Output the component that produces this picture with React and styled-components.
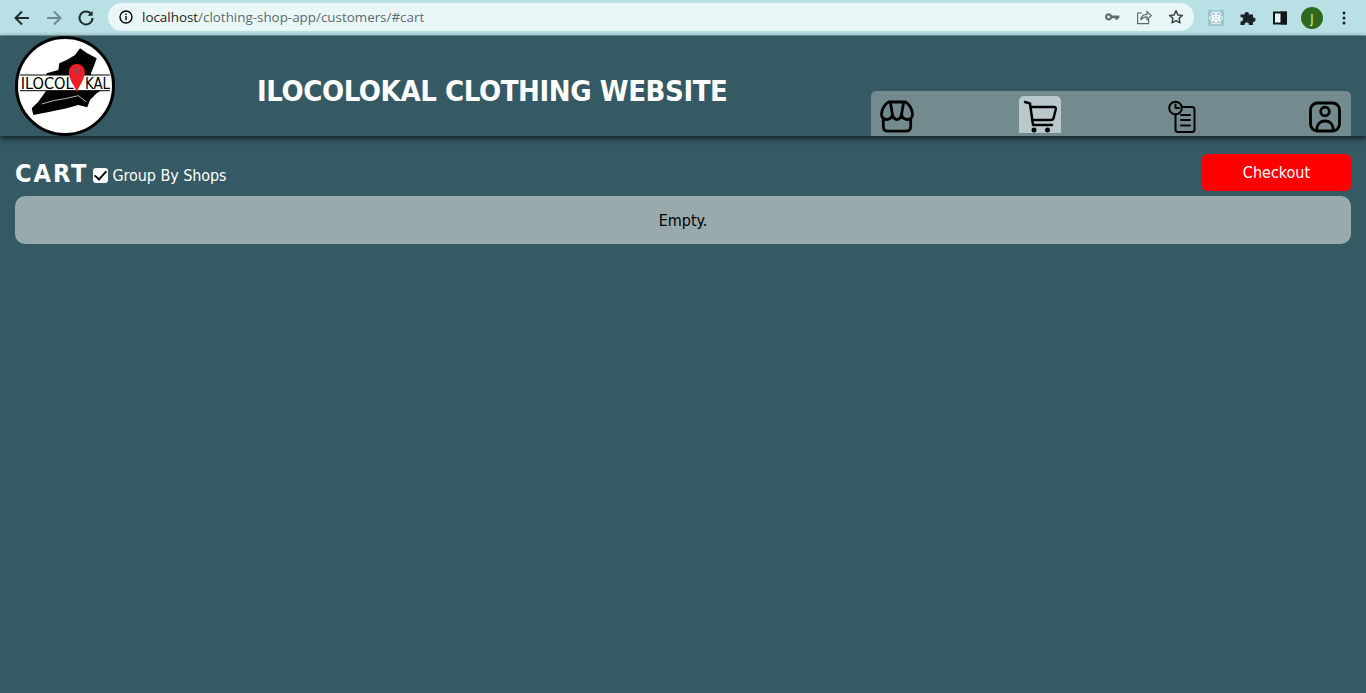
import React from 'react';
import styled, { createGlobalStyle } from 'styled-components';

const Global = createGlobalStyle`
    html, body {
        margin: 0;
        height: 100%;
        overflow: hidden;
        background: #355a63;
    }
    #root {
        height: 693px;
    }
`;

const Page = styled.div`
    display: flex;
    flex-direction: column;
    height: 693px;
    background: #355a63;
    font-family: 'DejaVu Sans', sans-serif;
    font-stretch: condensed;
`;

/* browser chrome */
const BrowserBar = styled.div`
    display: flex;
    align-items: center;
    height: 35px;
    padding: 0 10px;
    background: #b8e0e5;
    border-bottom: 1px solid #7fa3a9;
    box-sizing: content-box;
`;

const ChromeButton = styled.span`
    display: flex;
    align-items: center;
    justify-content: center;
    width: 24px;
    height: 24px;
    margin-right: ${p => p.$gap || 8}px;
    color: ${p => p.$color || '#202b2e'};
    flex: none;
`;

const UrlPill = styled.div`
    display: flex;
    align-items: center;
    width: 1086px;
    height: 28px;
    margin: 0 0 1px 2px;
    padding: 0 10px 0 10px;
    box-sizing: border-box;
    border-radius: 14px;
    background: #eaf7f8;
    flex: none;
`;

const UrlText = styled.span`
    flex: 1;
    margin-left: 8px;
    font-family: 'Open Sans', sans-serif;
    font-stretch: normal;
    font-size: 13.4px;
    color: #5d6a6d;
    b {
        font-weight: 400;
        color: #1f2527;
    }
`;

const PillIcon = styled.span`
    display: flex;
    width: 16px;
    height: 16px;
    margin-left: ${p => p.$gap || 0}px;
    color: ${p => p.$color || '#5f6b6e'};
`;

const Extensions = styled.div`
    display: flex;
    align-items: center;
    margin-left: 6px;
`;

const ExtSlot = styled.span`
    display: flex;
    align-items: center;
    justify-content: center;
    width: 32px;
    height: 24px;
`;

const Avatar = styled.span`
    display: flex;
    align-items: center;
    justify-content: center;
    width: 22px;
    height: 22px;
    border-radius: 50%;
    background: #2f6a1c;
    color: #e6f2d8;
    font-family: 'Open Sans', sans-serif;
    font-size: 13px;
`;

/* site header */
const Header = styled.header`
    position: relative;
    display: flex;
    height: 100px;
    padding: 0 15px;
    background: #355a63;
    box-shadow: 0 2px 6px rgba(0, 0, 0, 0.75);
`;

const Logo = styled.svg`
    width: 100px;
    height: 100px;
    flex: none;
`;

const Title = styled.h1`
    margin: 37px 0 0 142px;
    width: 614px;
    flex: none;
    font-size: 29px;
    line-height: 36px;
    font-weight: 700;
    letter-spacing: -0.42px;
    color: #fff;
    white-space: nowrap;
`;

const Nav = styled.nav`
    align-self: flex-end;
    display: flex;
    justify-content: space-between;
    width: 480px;
    height: 45px;
    padding: 5px 5px 3px;
    box-sizing: border-box;
    border-radius: 5px 5px 0 0;
    background: #738b8e;
`;

const NavItem = styled.a`
    display: flex;
    justify-content: center;
    align-items: flex-end;
    width: 42px;
    border-radius: 5px 5px 0 0;
    background: ${p => (p.$active ? '#b9c8cc' : 'transparent')};
    svg {
        display: block;
        width: 34px;
        height: 34px;
    }
`;

/* cart */
const Main = styled.main`
    padding: 18px 15px 0;
`;

const CartBar = styled.div`
    display: flex;
    align-items: center;
    justify-content: space-between;
    height: 37px;
    margin-bottom: 5px;
`;

const CartTitle = styled.div`
    display: flex;
    align-items: center;
    color: #fff;
`;

const Heading = styled.h2`
    margin: 2px 5px 0 0;
    font-size: 25px;
    line-height: 37px;
    font-weight: 700;
    letter-spacing: 2px;
`;

const GroupLabel = styled.label`
    display: flex;
    align-items: center;
    margin-top: 6px;
    font-size: 16px;
    letter-spacing: -0.07px;
`;

const GroupCheck = styled.input`
    position: relative;
    appearance: none;
    width: 15px;
    height: 15px;
    margin: 0 4px 0 0;
    border-radius: 3px;
    background: #fff;
    &:checked::after {
        content: '';
        position: absolute;
        left: 4px;
        top: 0;
        width: 5px;
        height: 10px;
        border: solid #111;
        border-width: 0 2.5px 2.5px 0;
        transform: rotate(42deg);
    }
`;

const CheckoutButton = styled.button`
    width: 149px;
    height: 37px;
    border: 0;
    border-radius: 5px;
    background: #ff0000;
    color: #fff;
    font-family: inherit;
    font-stretch: condensed;
    font-size: 16px;
`;

const EmptyPanel = styled.div`
    height: 48px;
    line-height: 50px;
    border-radius: 10px;
    background: #99aaad;
    color: #000;
    text-align: center;
    font-size: 16px;
`;

const BackIcon = ({ flip }) => (
    <svg width="18" height="18" viewBox="0 0 18 18" fill="none" stroke="currentColor" strokeWidth="2" style={flip ? { transform: 'scaleX(-1)' } : undefined}>
        <path d="M16 9H3M9 2.5 2.5 9 9 15.5" />
    </svg>
);

const ReloadIcon = () => (
    <svg width="18" height="18" viewBox="0 0 18 18" fill="none" stroke="currentColor" strokeWidth="2">
        <path d="M14.3 5.2A6.5 6.5 0 1 0 15.5 9" />
        <path d="M15.6 1.8v5h-5z" fill="currentColor" stroke="none" />
    </svg>
);

const InfoIcon = () => (
    <svg width="16" height="16" viewBox="0 0 16 16" fill="none" stroke="currentColor" strokeWidth="1.4">
        <circle cx="8" cy="8" r="6" />
        <path d="M8 7v4.2M8 4.6v1.4" />
    </svg>
);

const KeyIcon = () => (
    <svg width="16" height="16" viewBox="0 0 16 16" fill="currentColor">
        <path fillRule="evenodd" d="M4.6 4.2a3.6 3.6 0 0 1 3.4 2.4h7.4v2.6h-1.6v1.6h-2.4V9.2H8a3.6 3.6 0 1 1-3.4-5zm0 2.3a1.4 1.4 0 1 0 0 2.8 1.4 1.4 0 0 0 0-2.8z" />
    </svg>
);

const ShareIcon = () => (
    <svg width="16" height="16" viewBox="0 0 16 16" fill="none" stroke="currentColor" strokeWidth="1.2">
        <path d="M6 4H1.6v10.6h11V10" />
        <path d="M4.6 11c.6-3.6 3-5.6 6.4-5.6V2.6l4.2 4-4.2 4V7.8c-2.8 0-4.8 1-6.4 3.2z" />
    </svg>
);

const StarIcon = () => (
    <svg width="16" height="16" viewBox="0 0 16 16" fill="none" stroke="currentColor" strokeWidth="1.5" strokeLinejoin="round">
        <path d="M8 1.8l1.9 4.1 4.5.5-3.3 3 .9 4.5L8 11.6l-4 2.3.9-4.5-3.3-3 4.5-.5z" />
    </svg>
);

const ReactExtIcon = () => (
    <svg width="16" height="16" viewBox="0 0 16 16" fill="none" stroke="#fff" strokeWidth="1" style={{ background: '#9cc6cc' }}>
        <ellipse cx="8" cy="8" rx="6.5" ry="2.7" />
        <ellipse cx="8" cy="8" rx="6.5" ry="2.7" transform="rotate(60 8 8)" />
        <ellipse cx="8" cy="8" rx="6.5" ry="2.7" transform="rotate(120 8 8)" />
        <circle cx="8" cy="8" r="1.2" fill="#fff" />
    </svg>
);

const PuzzleIcon = () => (
    <svg width="16" height="16" viewBox="0 0 16 16" fill="#1b2124">
        <path d="M.5 4.5h4.2a2.1 2.1 0 1 1 4.1 0h4.2v3.2a2.1 2.1 0 1 1 0 4.1v3.2H8.8a2.1 2.1 0 1 0-4.1 0H.5v-3.7a2.1 2.1 0 1 0 0-4.1z" />
    </svg>
);

const SidePanelIcon = () => (
    <svg width="16" height="16" viewBox="0 0 16 16" fill="none" stroke="#12181a" strokeWidth="2">
        <rect x="2" y="2.5" width="12" height="11" fill="#eaf7f8" />
        <rect x="9.5" y="2.5" width="4.5" height="11" fill="#12181a" />
    </svg>
);

const DotsIcon = () => (
    <svg width="16" height="16" viewBox="0 0 16 16" fill="#1b2124">
        <circle cx="8" cy="3" r="1.5" />
        <circle cx="8" cy="8" r="1.5" />
        <circle cx="8" cy="13" r="1.5" />
    </svg>
);

const StoreIcon = () => (
    <svg viewBox="0 0 34 34" fill="none" stroke="#000" strokeWidth="2.8" strokeLinecap="round" strokeLinejoin="round">
        <path d="M8.5 3H25.5C29 5 32.5 10 32.5 15.5 32.5 18.5 30 20.5 27.5 20.5 25 20.5 22.5 19 21.5 16 20.5 19 19 20.5 17 20.5 15 20.5 13.5 19 12.5 16 11.5 19 9 20.5 6.5 20.5 4 20.5 1.5 18.5 1.5 15.5 1.5 10 5 5 8.5 3Z" />
        <path d="M10.5 4 12.5 16M23.500 4 21.5 16" />
        <path d="M3.3 20v7.500c0 3 1.700 4.700 4.700 4.700h18c3 0 4.700-1.700 4.700-4.700V20" />
    </svg>
);

const CartIcon = () => (
    <svg viewBox="0 0 34 34" fill="none" stroke="#000" strokeWidth="2.4" strokeLinecap="round" strokeLinejoin="round">
        <path d="M2 3l5 1.500L10 26h19" />
        <path d="M7.500 8h23.500c1.500 0 2 1 1.700 2.500L30.500 19.500c-.4 1-1 1.500-2.500 1.500H9.500" />
        <circle cx="11" cy="31" r="2.500" fill="#000" stroke="none" />
        <circle cx="24.500" cy="31" r="2.500" fill="#000" stroke="none" />
    </svg>
);

const HistoryIcon = () => (
    <svg viewBox="0 0 34 34" fill="none" stroke="#000" strokeWidth="2" strokeLinecap="round" strokeLinejoin="round">
        <path d="M14 8h13c1.500 0 2.500 1 2.500 2.500v20c0 1.500-1 2.500-2.500 2.500H13c-1.500 0-2.500-1-2.500-2.500V15" />
        <circle cx="10.500" cy="9" r="6.300" fill="#738b8e" />
        <path d="M10.500 5.500V9h3.500" />
        <path d="M16 16h9M16 21h9M16 26.500h9" />
    </svg>
);

const ProfileIcon = () => (
    <svg viewBox="0 0 34 34" fill="none" stroke="#000" strokeWidth="2.8" strokeLinecap="round" strokeLinejoin="round">
        <rect x="2.500" y="4" width="29" height="28" rx="7" />
        <circle cx="17" cy="12.500" r="4.300" />
        <path d="M8.700 31c0-5 3-9 8.300-9s8.300 4 8.300 9" />
    </svg>
);

const LogoMark = () => (
    <Logo viewBox="0 0 100 100">
        <circle cx="50" cy="50" r="48.500" fill="#fff" stroke="#000" strokeWidth="3" />
        <path d="M65 12.300 60 19 51.700 24 44.300 27.300 43.300 34 31.700 37.300V40H76V37.300L79.300 29 81.700 22.300 72.300 17.300Z" fill="#000" />
        <path d="M31.700 54 23.300 65.700 16.700 72.300 18.300 79 35 75.700 51.700 72.300 63.300 69 72.300 71.300 75 64 81.700 57.300 86.700 54Z" fill="#000" />
        <path d="M26.700 68 38.300 64.700 51.700 62.300 63.300 59.700 71 65.700" fill="none" stroke="#fff" strokeWidth="0.7" />
        <rect x="5" y="39" width="90" height="15.700" fill="#fff" />
        <path d="M5 39h90M5 54.700h90" stroke="#000" strokeWidth="1" />
        <text x="5.700" y="53.300" fontFamily="'DejaVu Sans', sans-serif" fontSize="15.500" textLength="53" lengthAdjust="spacingAndGlyphs">ILOCOL</text>
        <text x="70" y="53.300" fontFamily="'DejaVu Sans', sans-serif" fontSize="15.500" textLength="25" lengthAdjust="spacingAndGlyphs">KAL</text>
        <path d="M61.800 56c-1.500-5-8-12-8-20a8 8 0 0 1 16 0c0 8-6.500 15-8 20z" fill="#ee1f2b" />
        <circle cx="62" cy="35" r="3.500" fill="#b33a40" />
    </Logo>
);

const App = () => (
    <Page>
        <Global />
        <BrowserBar>
            <ChromeButton><BackIcon /></ChromeButton>
            <ChromeButton $color="#6f8a90"><BackIcon flip /></ChromeButton>
            <ChromeButton><ReloadIcon /></ChromeButton>
            <UrlPill>
                <InfoIcon />
                <UrlText><b>localhost</b>/clothing-shop-app/customers/#cart</UrlText>
                <PillIcon><KeyIcon /></PillIcon>
                <PillIcon $gap={16}><ShareIcon /></PillIcon>
                <PillIcon $gap={16} $color="#3c4447"><StarIcon /></PillIcon>
            </UrlPill>
            <Extensions>
                <ExtSlot><ReactExtIcon /></ExtSlot>
                <ExtSlot><PuzzleIcon /></ExtSlot>
                <ExtSlot><SidePanelIcon /></ExtSlot>
                <ExtSlot><Avatar>J</Avatar></ExtSlot>
                <ExtSlot><DotsIcon /></ExtSlot>
            </Extensions>
        </BrowserBar>
        <Header>
            <LogoMark />
            <Title>ILOCOLOKAL CLOTHING WEBSITE</Title>
            <Nav>
                <NavItem><StoreIcon /></NavItem>
                <NavItem $active><CartIcon /></NavItem>
                <NavItem><HistoryIcon /></NavItem>
                <NavItem><ProfileIcon /></NavItem>
            </Nav>
        </Header>
        <Main>
            <CartBar>
                <CartTitle>
                    <Heading>CART</Heading>
                    <GroupLabel>
                        <GroupCheck type="checkbox" defaultChecked />
                        Group By Shops
                    </GroupLabel>
                </CartTitle>
                <CheckoutButton>Checkout</CheckoutButton>
            </CartBar>
            <EmptyPanel>Empty.</EmptyPanel>
        </Main>
    </Page>
);

export default App;
